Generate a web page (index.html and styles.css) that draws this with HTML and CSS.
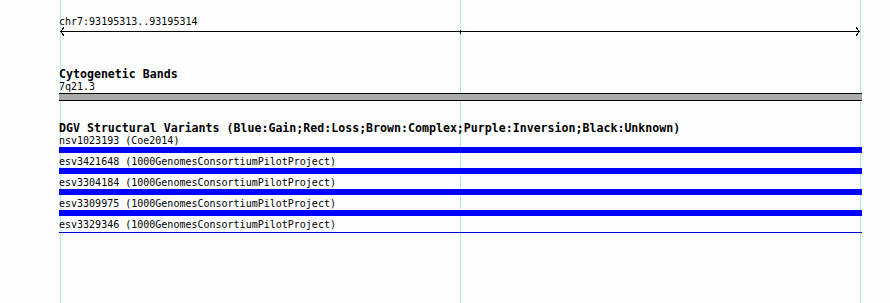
FILE: index.html
```html
<!DOCTYPE html>
<html lang="en">
  <head>
    <meta charset="UTF-8" />
    <title>chr7:93195313..93195314</title>
    <link rel="stylesheet" href="styles.css">
  </head>
  <body>
    <div class="panel">
      <!-- ruler -->
      <div class="ruler">
        <div class="ruler-label">chr7:93195313..93195314</div>
        <svg class="ruler-scale" width="803" height="9" viewBox="0 0 803 9">
          <path d="M1 4.5H801" />
          <path d="M5 0.5L1.5 4.5L5 8.5" />
          <path d="M797 0.5L800.5 4.5L797 8.5" />
          <path d="M401.5 2.5V6.5" />
        </svg>
      </div>

      <!-- cytogenetic bands -->
      <div class="track cytoband">
        <div class="track-title">Cytogenetic Bands</div>
        <div class="feature-label">7q21.3</div>
        <div class="band"></div>
      </div>

      <!-- DGV structural variants -->
      <div class="track dgv">
        <div class="track-title">DGV Structural Variants (Blue:Gain;Red:Loss;Brown:Complex;Purple:Inversion;Black:Unknown)</div>

        <div class="variant">
          <div class="feature-label">nsv1023193 (Coe2014)</div>
          <div class="variant-bar gain"></div>
        </div>
        <div class="variant">
          <div class="feature-label">esv3421648 (1000GenomesConsortiumPilotProject)</div>
          <div class="variant-bar gain"></div>
        </div>
        <div class="variant">
          <div class="feature-label">esv3304184 (1000GenomesConsortiumPilotProject)</div>
          <div class="variant-bar gain"></div>
        </div>
        <div class="variant">
          <div class="feature-label">esv3309975 (1000GenomesConsortiumPilotProject)</div>
          <div class="variant-bar gain"></div>
        </div>
        <div class="variant">
          <div class="feature-label">esv3329346 (1000GenomesConsortiumPilotProject)</div>
          <div class="variant-bar gain thin"></div>
        </div>
      </div>
    </div>
  </body>
</html>
```

FILE: styles.css
```css
body {
  margin: 0;
  background-color: #fdfefd;
  font-family: "DejaVu Sans Mono", "Liberation Mono", monospace;
  color: #000;
}

/* grid lines drawn behind the tracks */
.panel {
  height: 303px;
  padding: 16px 0 0 59px;
  box-sizing: border-box;
  background-image:
    linear-gradient(#a6eef0, #a6eef0),
    linear-gradient(#a6eef0, #a6eef0),
    linear-gradient(#a6eef0, #a6eef0);
  background-size: 1px 100%;
  background-position: 60px 0, 460px 0, 860px 0;
  background-repeat: no-repeat;
  overflow: hidden;
}

.ruler,
.track {
  width: 803px;
}

.ruler-label,
.feature-label {
  font-size: 10px;
  line-height: 11px;
  height: 11px;
  white-space: nowrap;
}

.ruler-scale {
  display: block;
  shape-rendering: crispEdges;
}

.ruler-scale path {
  fill: none;
  stroke: #000;
  stroke-width: 1;
}

.cytoband {
  margin-top: 32px;
}

.dgv {
  margin-top: 21px;
}

.track-title {
  font-size: 11.6px;
  font-weight: bold;
  line-height: 13px;
  height: 13px;
  white-space: nowrap;
}

.band {
  margin-top: 1px;
  height: 6px;
  background-color: #aaaaaa;
  border-top: 1px solid #000;
  border-bottom: 1px solid #000;
}

.variant + .variant {
  margin-top: 3px;
}

.variant-bar {
  margin-top: 1px;
  height: 6px;
}

.gain {
  background-color: #0000ff;
}

.variant-bar.thin {
  margin-top: 2px;
  height: 1px;
  background-color: #0000cc;
}
```
